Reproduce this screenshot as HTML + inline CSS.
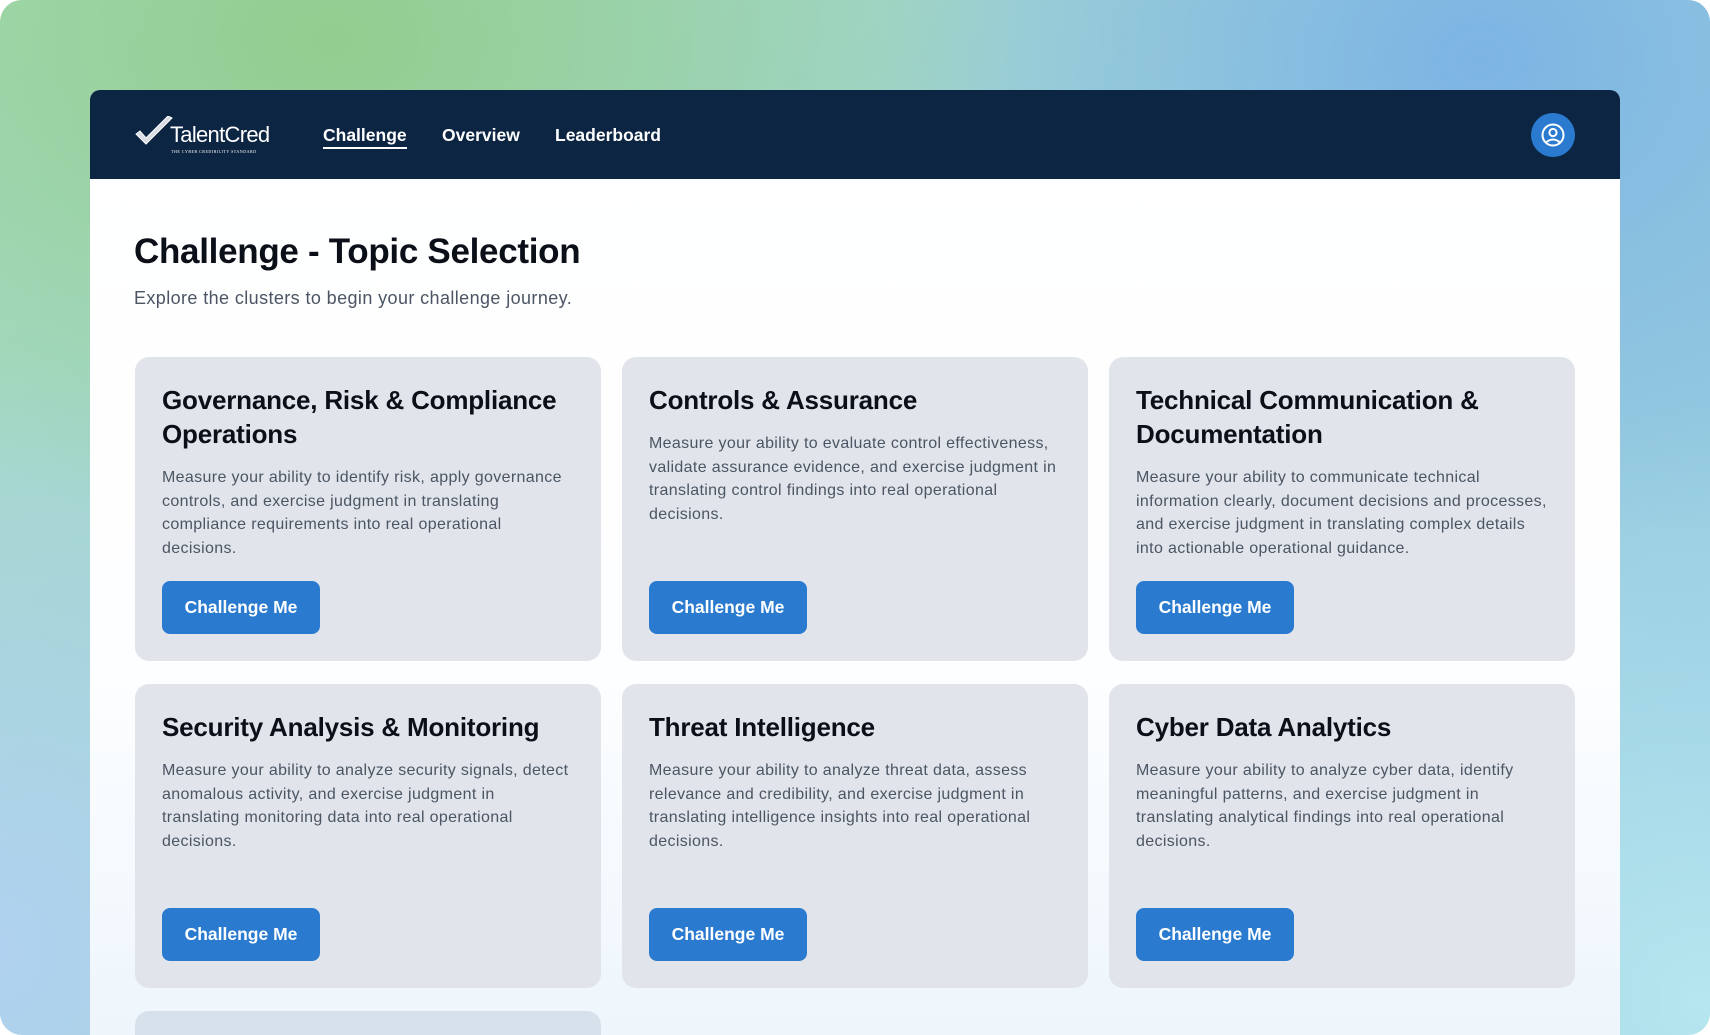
<!DOCTYPE html>
<html><head><meta charset="utf-8"><style>
*{margin:0;padding:0;box-sizing:border-box}
html,body{width:1710px;height:1035px;overflow:hidden;background:#fff;font-family:"Liberation Sans",sans-serif}
.bg{position:absolute;left:0;top:0;width:1710px;height:1035px;border-radius:22px;overflow:hidden;
background:
radial-gradient(ellipse 700px 500px at 330px 40px,#93cd8e 0%,rgba(147,205,142,0) 100%),
radial-gradient(ellipse 600px 500px at 1480px 60px,#7cb4e4 0%,rgba(124,180,228,0) 100%),
radial-gradient(ellipse 600px 600px at 1700px 1000px,#b6e6ee 0%,rgba(182,230,238,0) 100%),
radial-gradient(ellipse 500px 600px at 0px 950px,#b0d2f0 0%,rgba(176,210,240,0) 100%),
linear-gradient(135deg,#a8dcc0 0%,#9fd2d8 50%,#8fc6e4 100%);}
.panel{position:absolute;left:90px;top:90px;width:1530px;height:945px;border-radius:10px 10px 0 0;overflow:hidden;background:linear-gradient(180deg,#fff 0%,#fdfeff 60%,#eef6fc 100%)}
.hdr{height:89px;background:#0c2543;position:relative}
.logo{position:absolute;left:44px;top:26px;color:#fff}
.logo .n{position:absolute;left:36px;top:6px;font-size:22px;letter-spacing:-0.7px;font-weight:400}
.logo .s{position:absolute;left:37px;top:33px;font-size:4px;letter-spacing:.5px;white-space:nowrap;font-family:"Liberation Serif",serif}
.nav{position:absolute;top:35px;font-size:17.5px;font-weight:bold;color:#fff}
.nav.a{border-bottom:2px solid #fff;padding-bottom:1px}
.av{position:absolute;left:1441px;top:23px;width:44px;height:44px;border-radius:50%;background:#2a7bd0}
h1{position:absolute;left:44px;top:142px;font-size:35px;color:#0b0f18;font-weight:bold;letter-spacing:-0.3px}
.sub{position:absolute;left:44px;top:198px;font-size:18px;letter-spacing:0.4px;color:#4b5563}
.card{position:absolute;width:466px;height:304px;border-radius:14px;background:#e1e5eb}
.card h2{position:absolute;left:27px;top:26px;width:400px;font-size:26px;line-height:34px;color:#0b0f18;font-weight:bold;letter-spacing:-0.2px}
.card p{position:absolute;left:27px;width:412px;font-size:16px;line-height:23.5px;color:#4b5563;letter-spacing:0.35px}
.btn{position:absolute;left:27px;bottom:27px;width:158px;height:53px;border-radius:8px;background:#2a7bd0;color:#fff;font-weight:bold;font-size:17.5px;text-align:center;line-height:53px}
</style></head><body>
<div class="bg"></div>
<div class="panel">
<div class="hdr">
 <div class="logo">
  <svg width="40" height="32" viewBox="0 0 40 32" style="position:absolute;left:0;top:0"><path d="M2 18 L12 28 L38 2 L34 0 L12 22 L6 15 Z" fill="#d9dde3" stroke="#fff" stroke-width="1"/></svg>
  <span class="n">TalentCred</span><span class="s">THE CYBER CREDIBILITY STANDARD</span>
 </div>
 <span class="nav a" style="left:233px">Challenge</span>
 <span class="nav" style="left:352px">Overview</span>
 <span class="nav" style="left:465px">Leaderboard</span>
 <div class="av"><svg width="44" height="44" viewBox="0 0 44 44"><circle cx="22" cy="22" r="10.5" fill="none" stroke="#fff" stroke-width="2"/><circle cx="22" cy="19.5" r="3.6" fill="none" stroke="#fff" stroke-width="2"/><path d="M15 29.5 Q22 23.5 29 29.5" fill="none" stroke="#fff" stroke-width="2"/></svg></div>
</div>
<h1>Challenge - Topic Selection</h1>
<div class="sub">Explore the clusters to begin your challenge journey.</div>

<div class="card" style="left:45px;top:267px"><h2>Governance, Risk &amp; Compliance Operations</h2><p style="top:109px">Measure your ability to identify risk, apply governance controls, and exercise judgment in translating compliance requirements into real operational decisions.</p><div class="btn">Challenge Me</div></div>
<div class="card" style="left:532px;top:267px"><h2>Controls &amp; Assurance</h2><p style="top:75px">Measure your ability to evaluate control effectiveness, validate assurance evidence, and exercise judgment in translating control findings into real operational decisions.</p><div class="btn">Challenge Me</div></div>
<div class="card" style="left:1019px;top:267px"><h2>Technical Communication &amp; Documentation</h2><p style="top:109px">Measure your ability to communicate technical information clearly, document decisions and processes, and exercise judgment in translating complex details into actionable operational guidance.</p><div class="btn">Challenge Me</div></div>

<div class="card" style="left:45px;top:594px"><h2>Security Analysis &amp; Monitoring</h2><p style="top:75px">Measure your ability to analyze security signals, detect anomalous activity, and exercise judgment in translating monitoring data into real operational decisions.</p><div class="btn">Challenge Me</div></div>
<div class="card" style="left:532px;top:594px"><h2>Threat Intelligence</h2><p style="top:75px">Measure your ability to analyze threat data, assess relevance and credibility, and exercise judgment in translating intelligence insights into real operational decisions.</p><div class="btn">Challenge Me</div></div>
<div class="card" style="left:1019px;top:594px"><h2>Cyber Data Analytics</h2><p style="top:75px">Measure your ability to analyze cyber data, identify meaningful patterns, and exercise judgment in translating analytical findings into real operational decisions.</p><div class="btn">Challenge Me</div></div>

<div class="card" style="left:45px;top:921px;height:30px;border-radius:14px 14px 0 0;background:#d6e1ec"></div>
</div>
</body></html>
